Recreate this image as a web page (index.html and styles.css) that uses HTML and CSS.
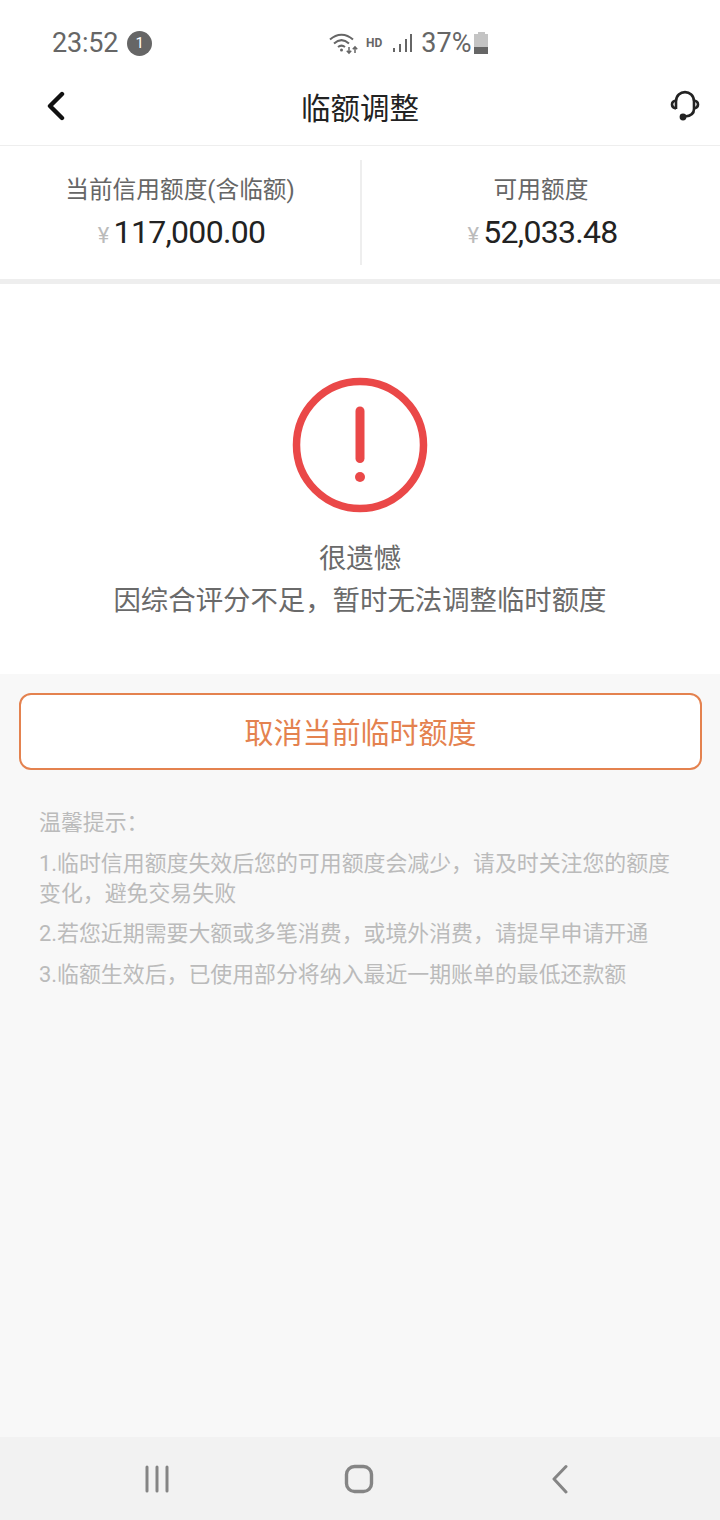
FILE: index.html
```html
<!DOCTYPE html>
<html lang="zh">
<head>
  <meta charset="UTF-8">
  <meta name="viewport" content="width=device-width, initial-scale=1.0">
  <title>临额调整</title>
  <link rel="stylesheet" href="styles.css">
</head>
<body>
  <div class="page">

    <!-- status bar -->
    <div class="status-bar">
      <div class="status-left">
        <span class="clock">23:52</span>
        <span class="notify-badge">1</span>
      </div>
      <div class="status-right">
        <svg class="wifi-icon" width="30" height="24" viewBox="0 0 30 24" fill="none" stroke="#666" stroke-width="2">
          <path d="M1 8.5C8 2 17 2 24 8.5"/>
          <path d="M5 12.5C10 8 15 8 20 12.5"/>
          <path d="M9 16C11.500 14 13.500 14 16 16"/>
          <circle cx="12.500" cy="19" r="1.500" fill="#666" stroke="none"/>
          <path d="M20 16v6M17.800 19.800L20 22.200L22.200 19.800" stroke-width="1.500"/>
          <path d="M26 22v-6M23.800 18.200L26 15.800L28.200 18.200" stroke-width="1.500"/>
        </svg>
        <span class="hd-label">HD</span>
        <svg class="signal-icon" width="20" height="20" viewBox="0 0 20 20" fill="#666">
          <rect x="0" y="15" width="2" height="4"/>
          <rect x="6" y="11" width="2" height="8"/>
          <rect x="12" y="6" width="2" height="13"/>
          <rect x="17" y="1" width="2" height="18"/>
        </svg>
        <span class="battery-text">37%</span>
        <span class="battery"><span class="battery-cap"></span><span class="battery-body"><span class="battery-level"></span></span></span>
      </div>
    </div>

    <!-- title bar -->
    <div class="title-bar">
      <svg class="back-icon" width="20" height="30" viewBox="0 0 20 30" fill="none" stroke="#111" stroke-width="4.400" stroke-linecap="round" stroke-linejoin="round">
        <path d="M16 3L4 15L16 27"/>
      </svg>
      <h1>临额调整</h1>
      <svg class="service-icon" width="30" height="32" viewBox="0 0 30 32" fill="none" stroke="#222" stroke-width="2.600">
        <path d="M6 19V11.500C6 -1 24 -1 24 11.500V19C24 23 21 26 15 26.500"/>
        <path d="M6 10.500C3 11 2 13 2 14.500C2 16.500 3.500 18 6 18.500"/>
        <path d="M24 10.500C27 11 28 13 28 14.500C28 16.500 26.500 18 24 18.500"/>
        <circle cx="13" cy="27" r="3.400" fill="#222" stroke="none"/>
      </svg>
    </div>

    <!-- limits -->
    <div class="summary">
      <div class="summary-item">
        <div class="summary-label">当前信用额度(含临额)</div>
        <div class="summary-amount"><span class="yen">¥</span>117,000.00</div>
      </div>
      <div class="summary-item">
        <div class="summary-label">可用额度</div>
        <div class="summary-amount"><span class="yen">¥</span>52,033.48</div>
      </div>
    </div>

    <!-- result -->
    <div class="result">
      <svg class="alert-icon" width="136" height="136" viewBox="0 0 136 136" fill="none" stroke="#ea4848">
        <circle cx="68" cy="68" r="63.500" stroke-width="7.500"/>
        <path d="M68 34V81.500" stroke-width="9" stroke-linecap="round"/>
        <circle cx="68" cy="100" r="5" fill="#ea4848" stroke="none"/>
      </svg>
      <p class="result-title">很遗憾</p>
      <p class="result-text">因综合评分不足，暂时无法调整临时额度</p>
    </div>

    <div class="content">
      <button class="cancel-button">取消当前临时额度</button>
      <div class="tips">
        <p>温馨提示：</p>
        <p>1.临时信用额度失效后您的可用额度会减少，请及时关注您的额度变化，避免交易失败</p>
        <p>2.若您近期需要大额或多笔消费，或境外消费，请提早申请开通</p>
        <p>3.临额生效后，已使用部分将纳入最近一期账单的最低还款额</p>
      </div>
    </div>

    <!-- android nav -->
    <div class="nav-bar">
      <svg width="28" height="28" viewBox="0 0 28 28" fill="none" stroke="#858585" stroke-width="3" stroke-linecap="round">
        <path d="M4 2V26M14 2V26M24 2V26"/>
      </svg>
      <svg class="nav-home" width="30" height="30" viewBox="0 0 30 30" fill="none" stroke="#858585" stroke-width="3.400">
        <rect x="2.500" y="2.500" width="25" height="25" rx="8"/>
      </svg>
      <svg width="20" height="30" viewBox="0 0 20 30" fill="none" stroke="#858585" stroke-width="3" stroke-linecap="round" stroke-linejoin="round">
        <path d="M16 2.500L4 15L16 28"/>
      </svg>
    </div>

  </div>
</body>
</html>
```

FILE: styles.css
```css
* {
  box-sizing: border-box;
}

body {
  margin: 0;
  background: #f8f8f8;
  font-family: Roboto, "Noto Sans CJK SC", sans-serif;
}

.page {
  width: 720px;
  height: 1520px;
  display: flex;
  flex-direction: column;
}

.status-bar {
  height: 76px;
  background: #fff;
  padding: 10px 0 0 52px;
  display: flex;
  align-items: center;
  color: #666;
}

.status-left {
  width: 277px;
  display: flex;
  align-items: center;
  gap: 9px;
}

.clock {
  font-size: 27px;
  letter-spacing: -0.2px;
}

.notify-badge {
  width: 25px;
  height: 25px;
  border-radius: 50%;
  background: #666;
  color: #fff;
  font-size: 15px;
  line-height: 25px;
  text-align: center;
}

.status-right {
  display: flex;
  align-items: center;
}

.hd-label {
  font-size: 12px;
  font-weight: 700;
  margin-left: 7px;
}

.signal-icon {
  margin-left: 11px;
}

.battery-text {
  font-size: 27px;
  margin-left: 8px;
}

.battery {
  width: 14px;
  height: 22px;
  margin-left: 3px;
  display: flex;
  flex-direction: column;
  align-items: center;
}

.battery-cap {
  width: 7px;
  height: 2px;
  background: #c4c4c4;
}

.battery-body {
  width: 14px;
  height: 20px;
  background: #c4c4c4;
  display: flex;
  align-items: flex-end;
}

.battery-level {
  width: 100%;
  height: 7px;
  background: #666;
}

.title-bar {
  height: 70px;
  background: #fff;
  border-bottom: 1px solid #eee;
  padding: 0 20px 10px 46px;
  display: grid;
  grid-template-columns: 1fr auto 1fr;
  align-items: center;
}

.title-bar h1 {
  margin: 0;
  font-size: 29.5px;
  font-weight: 400;
  color: #222;
  /* side paddings differ, so pull the title back to the page centre */
  transform: translateX(-13px);
}

.service-icon {
  justify-self: end;
}

.summary {
  height: 138px;
  background: #fff;
  border-bottom: 5px solid #eee;
  padding: 14px 0;
  display: flex;
}

.summary-item {
  flex: 1;
  padding-top: 15px;
  text-align: center;
}

.summary-item:first-child {
  border-right: 2px solid #eee;
  flex: 0 0 362px;
}

.summary-label {
  font-size: 23.7px;
  line-height: 30px;
  color: #666;
}

.summary-amount {
  margin-top: 7px;
  padding-left: 3px;
  font-size: 32px;
  line-height: 40px;
  letter-spacing: -0.7px;
  color: #222;
}

.yen {
  font-size: 22px;
  color: #bbb;
  margin-right: 5px;
}

.result {
  height: 390px;
  background: #fff;
  padding-top: 93px;
  display: flex;
  flex-direction: column;
  align-items: center;
}

.result-title,
.result-text {
  margin: 0;
  font-size: 27.4px;
  line-height: 42px;
  color: #6a6a6a;
}

.result-title {
  margin-top: 25px;
}

.content {
  flex: 1;
  padding: 19px 18px 0 19px;
}

.cancel-button {
  display: block;
  width: 100%;
  height: 77px;
  padding-bottom: 2px;
  background: #fff;
  border: 2px solid #e4824f;
  border-radius: 12px;
  font-family: inherit;
  font-size: 29px;
  color: #e4824f;
}

.tips {
  padding: 38px 20px 0 20px;
  font-size: 21.9px;
  line-height: 30px;
  color: #bbb;
}

.tips p {
  margin: 0 0 10.5px;
}

.nav-bar {
  height: 83px;
  background: #f2f2f2;
  padding: 0 150px 0 143px;
  display: flex;
  align-items: center;
  justify-content: space-between;
}

.nav-home {
  margin-right: 3px;
}
```
